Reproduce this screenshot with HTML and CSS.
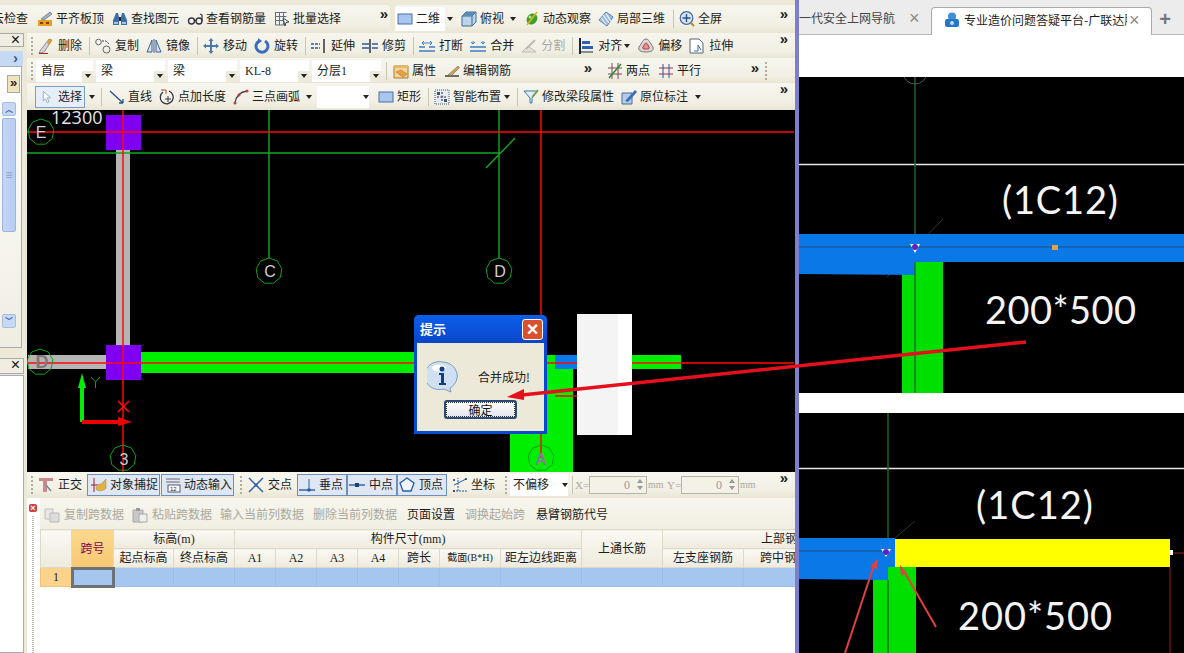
FILE: index.html
```html
<!DOCTYPE html>
<html lang="zh">
<head>
<meta charset="utf-8">
<title>钢筋算量与问题答疑</title>
<link rel="stylesheet" href="styles.css">
</head>
<body>
<svg class="defs" width="0" height="0">
<defs>
<symbol id="i-level" viewBox="0 0 16 16"><path d="M1 9h14v6H1z" fill="#e8a020"/><path d="M3 11h3v2H3zM9 11h3v2H9z" fill="#8a3a10"/><path d="M4 8 13 1l2 2-8 6z" fill="#9fb4c8" stroke="#556" stroke-width=".6"/></symbol>
<symbol id="i-binoc" viewBox="0 0 16 16"><path d="M2 7 4 2h2l1 4v8H1V9zM14 7l-2-5h-2L9 6v8h6V9z" fill="#3a6ea8"/><path d="M7 6h2v4H7z" fill="#223"/><path d="M2 11h4v2H2zM10 11h4v2h-4z" fill="#a8c4e4"/></symbol>
<symbol id="i-glass" viewBox="0 0 16 16"><circle cx="4.500" cy="10" r="3" fill="none" stroke="#334" stroke-width="1.400"/><circle cx="12" cy="10" r="3" fill="none" stroke="#334" stroke-width="1.400"/><path d="M7.500 9.500h1.500M15 10V4l-2-1" fill="none" stroke="#334" stroke-width="1.200"/></symbol>
<symbol id="i-batch" viewBox="0 0 16 16"><path d="M1.500 1.500h11M1.500 5.500h11M1.500 9.500h8M1.500 14h8M1.500 1v13M5.500 1v13M9.500 1v13" stroke="#5c6f90" fill="none"/><path d="M9 7l6 4-3 .5L11 15z" fill="#fff" stroke="#345"/></symbol>
<symbol id="i-rect" viewBox="0 0 16 16"><rect x="1" y="3" width="14" height="10" fill="#a9c6f0" stroke="#4b6fa8"/></symbol>
<symbol id="i-cube" viewBox="0 0 16 16"><path d="M1 5 5 1h10v10l-4 4H1z" fill="#bcd4ea" stroke="#3f6d92"/><path d="M1 5h10v10M11 5l4-4" fill="none" stroke="#3f6d92"/><path d="M1 5 5 1h10l-4 4z" fill="#5b8cb4"/></symbol>
<symbol id="i-orbit" viewBox="0 0 16 16"><ellipse cx="8" cy="8" rx="5" ry="6" transform="rotate(40 8 8)" fill="#3aa030"/><path d="M13 1 3 14" stroke="#e8b020" stroke-width="1.500"/><circle cx="6" cy="6" r="1.500" fill="#b6e890"/></symbol>
<symbol id="i-local" viewBox="0 0 16 16"><path d="M8 1l7 5-6 9-8-6z" fill="#9fc0e6" stroke="#567fae"/><path d="M5 4l6 8M8 2.500l5 8M3 6.500l5 7" stroke="#fff" stroke-width="1"/></symbol>
<symbol id="i-full" viewBox="0 0 16 16"><circle cx="7.500" cy="7" r="6.300" fill="#d4e4f6" stroke="#47689a" stroke-width="1.200"/><path d="M7.500 3v8M3.500 7h8" stroke="#2b5088" stroke-width="1.400"/><path d="m12 12 3 3" stroke="#b88a20" stroke-width="2"/></symbol>
<symbol id="i-del" viewBox="0 0 16 16"><path d="M1 15c4 0 6-1 7-4l6-9-3-1-6 8c-2 2-3 4-4 6z" fill="#d8d4e0" stroke="#555" stroke-width=".6"/><path d="M1 15.500h9" stroke="#b02020"/><path d="m11 1 3 1-3 5-2-2z" fill="#e0a030"/></symbol>
<symbol id="i-copy" viewBox="0 0 16 16"><circle cx="3.500" cy="4" r="2.800" fill="none" stroke="#667"/><circle cx="11.500" cy="11.500" r="3.500" fill="none" stroke="#667"/><path d="M7 3h4l3 3" fill="none" stroke="#345" stroke-dasharray="2 1"/></symbol>
<symbol id="i-mirror" viewBox="0 0 16 16"><path d="M6 2v12H1zM10 2v12h5z" fill="#d6e3f2" stroke="#3d5f8c"/><path d="M8 1v14" stroke="#3d5f8c"/></symbol>
<symbol id="i-move" viewBox="0 0 16 16"><path d="M8 0l2.500 3H9v4h4V5.500L16 8l-3 2.500V9H9v4h1.500L8 16l-2.500-3H7V9H3v1.500L0 8l3-2.500V7h4V3H5.500z" fill="#4d79ad"/></symbol>
<symbol id="i-rot" viewBox="0 0 16 16"><path d="M5 3a6 6 0 1 0 6 0" fill="none" stroke="#3a6cc0" stroke-width="3"/><path d="M4 0v6l4-3z" fill="#3a6cc0"/></symbol>
<symbol id="i-ext" viewBox="0 0 16 16"><path d="M0 6h9M0 10h9" stroke="#3057a0" stroke-dasharray="3 1" stroke-width="1.400"/><path d="M13 1v14" stroke="#333" stroke-width="1.500"/></symbol>
<symbol id="i-trim" viewBox="0 0 16 16"><path d="M0 6h7M0 10h7M10 6h6M10 10h6" stroke="#3057a0" stroke-width="1.400"/><path d="M8 1v14" stroke="#333" stroke-width="1.500"/></symbol>
<symbol id="i-break" viewBox="0 0 16 16"><path d="M0 9h6M10 9h6M0 13h16" stroke="#3d7ec8" stroke-width="1.500"/><path d="M3 5h10M5 3 3 5l2 2M11 3l2 2-2 2" stroke="#3d7ec8" fill="none"/></symbol>
<symbol id="i-merge" viewBox="0 0 16 16"><path d="M0 9h16M0 13h16" stroke="#3d7ec8" stroke-width="1.500"/><path d="M3 6V3M13 6V3M1 4l2 2 2-2M11 4l2 2 2-2" stroke="#3d7ec8" fill="none"/></symbol>
<symbol id="i-split" viewBox="0 0 16 16"><path d="M1 14h14L7 8z" fill="#e6e4da" stroke="#bbb"/><path d="m5 11 9-9" stroke="#bbb" stroke-width="2"/></symbol>
<symbol id="i-align" viewBox="0 0 16 16"><path d="M2 0v16" stroke="#223" stroke-width="2"/><path d="M4 3h8v3H4z" fill="#2b62b8"/><path d="M4 8h11v3H4z" fill="#2b62b8"/><path d="M3 14h12" stroke="#223"/></symbol>
<symbol id="i-offset" viewBox="0 0 16 16"><path d="M8 1c3 0 4 4 7 8 1 3-1 5-7 5s-8-2-7-5c3-4 4-8 7-8z" fill="#d8d8d8" stroke="#777"/><path d="M8 5c1 0 2 2 3 4 1 2-1 2-3 2s-4 0-3-2c1-2 2-4 3-4z" fill="#e89090" stroke="#b03030"/></symbol>
<symbol id="i-stretch" viewBox="0 0 16 16"><path d="M1 1h9l4 4v10H1z" fill="#fff" stroke="#56657a"/><path d="M9 7v6H5M9 7l3 5" stroke="#3a70b0" fill="none"/></symbol>
<symbol id="i-attr" viewBox="0 0 16 16"><path d="M1 3h14v12H1z" fill="#f4d690" stroke="#a87a30"/><path d="M1 3h14v2H1z" fill="#e8b860"/><path d="m3 9 5-2 6 4-4 3z" fill="#e8a040" stroke="#964" stroke-width=".5"/></symbol>
<symbol id="i-edit" viewBox="0 0 16 16"><path d="M1 13h14" stroke="#333" stroke-width="1.400"/><path d="M4 12 14 3l1.500 1.500L7 13z" fill="#cda060" stroke="#654" stroke-width=".5"/></symbol>
<symbol id="i-two" viewBox="0 0 16 16"><path d="M1 5h14M1 11h14M5 0v16M11 0v16" stroke="#7c4a60"/><path d="m2 15 12-14" stroke="#2a8a30" stroke-width="1.500"/></symbol>
<symbol id="i-par" viewBox="0 0 16 16"><path d="M1 5h14M1 11h14" stroke="#a03050"/><path d="M5 1v14M11 1v14" stroke="#3050a0"/></symbol>
<symbol id="i-sel" viewBox="0 0 16 16"><path d="M4 1v12l3-3 2 5 2-1-2-5h4z" fill="#fff" stroke="#8aa0b8"/></symbol>
<symbol id="i-line" viewBox="0 0 16 16"><path d="m1 2 13 12M14 14v-4M14 14h-4" stroke="#24508c" fill="none" stroke-width="1.300"/></symbol>
<symbol id="i-plen" viewBox="0 0 16 16"><path d="M4 3a6.500 6.500 0 1 0 6-.8" fill="none" stroke="#334" stroke-width="1.300"/><path d="M2 1h5v4" fill="none" stroke="#c04030"/><path d="M9 7v6M6 10h6" stroke="#334"/></symbol>
<symbol id="i-arc" viewBox="0 0 16 16"><path d="M2 14C3 7 7 3 14 2" fill="none" stroke="#445" stroke-width="1.300"/><circle cx="2" cy="14" r="1.500" fill="#c04040"/><circle cx="6" cy="6" r="1.500" fill="#c04040"/><circle cx="14" cy="2" r="1.500" fill="#c04040"/></symbol>
<symbol id="i-smart" viewBox="0 0 16 16"><rect x="1" y="1" width="14" height="14" fill="#e6ecf2" stroke="#456" stroke-dasharray="1 1"/><path d="M8 3v10M3 8h10" stroke="#224" stroke-dasharray="2 1.500"/><path d="M3 3h3v3H3zM10 10h3v3h-3z" fill="#456"/></symbol>
<symbol id="i-mod" viewBox="0 0 16 16"><path d="M1 2h14L9 9v5H7V9z" fill="#dff0f8" stroke="#3878a8"/><path d="m9 8 6-7" stroke="#88a030" stroke-width="1.500"/></symbol>
<symbol id="i-mark" viewBox="0 0 16 16"><path d="M1 4h10v11H1z" fill="#b6cce8" stroke="#45689a"/><path d="M4 12 14 1l2 2-9 10z" fill="#3a70b8"/></symbol>
<symbol id="i-ortho" viewBox="0 0 16 16"><path d="M1 1h14v3H9v11H5V4H1z" fill="#c88a8a"/><path d="m8 8 5 6" stroke="#789" stroke-width="1.500"/></symbol>
<symbol id="i-snap" viewBox="0 0 16 16"><path d="M0 8h7M3 1v14" stroke="#a02020"/><path d="M5 12c0-4 3-5 5-5l5-5v9c-1 3-9 4-10 1z" fill="#e0b040" stroke="#986" stroke-width=".5"/></symbol>
<symbol id="i-dyn" viewBox="0 0 16 16"><path d="M1 2h14M1 5h14" stroke="#667"/><rect x="3" y="8" width="12" height="7" fill="#fff" stroke="#556"/><text class="ic-t" x="5" y="14">12</text></symbol>
<symbol id="i-cross" viewBox="0 0 16 16"><path d="m1 1 14 14M15 1 1 15" stroke="#2a5aa8" stroke-width="1.400"/><circle cx="8" cy="8" r="1.500" fill="#2a5aa8"/></symbol>
<symbol id="i-perp" viewBox="0 0 16 16"><path d="M0 13h16" stroke="#2a5aa8" stroke-width="1.400"/><path d="M10 2v11" stroke="#2a5aa8"/><circle cx="10" cy="13" r="1.800" fill="#2a5aa8"/></symbol>
<symbol id="i-mid" viewBox="0 0 16 16"><path d="M0 8h16" stroke="#2a5aa8" stroke-width="1.400"/><rect x="6" y="6" width="4" height="4" fill="#17407c"/></symbol>
<symbol id="i-vert" viewBox="0 0 16 16"><path d="M8 1l7 5-3 8H4L1 6z" fill="#f0f6fc" stroke="#2a5aa8" stroke-width="1.300"/></symbol>
<symbol id="i-coord" viewBox="0 0 16 16"><path d="M1 14h14M6 14V1" stroke="#2a5aa8" stroke-dasharray="2 1"/><path d="m2 8 6-3 6-3" stroke="#2a5aa8"/><circle cx="2" cy="3" r="1" fill="#234"/><circle cx="14" cy="2" r="1" fill="#234"/><circle cx="2" cy="14" r="1" fill="#234"/></symbol>
<symbol id="i-gcopy" viewBox="0 0 16 16"><path d="M1 2h8v10H1z" fill="#e8e8e8" stroke="#c0c0c0"/><path d="M6 6h9v9H6z" fill="#dcdcdc" stroke="#bbb"/></symbol>
<symbol id="i-gpaste" viewBox="0 0 16 16"><path d="M1 3h10v12H1z" fill="#c8c8c8" stroke="#aaa"/><path d="M4 1h4v3H4z" fill="#999"/><path d="M7 7h8v8H7z" fill="#eee" stroke="#aaa"/></symbol>
<g id="ax"><polygon points="0,-13 8.400,-10 12.800,-2.300 11.300,6.500 4.400,12.200 -4.400,12.200 -11.300,6.500 -12.800,-2.300 -8.400,-10" fill="none" stroke="#0fa020"/></g>
</defs>
</svg>

<div class="page">
  <main class="app">
    <div class="top-row">
      <div class="bar bar-a tight">
        <span class="cut">云检查</span>
        <span class="tool"><svg class="ic"><use href="#i-level"/></svg>平齐板顶</span>
        <span class="tool"><svg class="ic"><use href="#i-binoc"/></svg>查找图元</span>
        <span class="tool"><svg class="ic"><use href="#i-glass"/></svg>查看钢筋量</span>
        <span class="tool"><svg class="ic"><use href="#i-batch"/></svg>批量选择</span>
        <span class="more">»</span>
      </div>
      <div class="bar bar-b tight">
        <span class="tool chosen"><svg class="ic"><use href="#i-rect"/></svg>二维</span><i class="dd dd-view"></i>
        <span class="tool"><svg class="ic"><use href="#i-cube"/></svg>俯视</span><i class="dd dd-view"></i>
        <span class="tool t-7"><svg class="ic"><use href="#i-orbit"/></svg>动态观察</span>
        <span class="tool"><svg class="ic"><use href="#i-local"/></svg>局部三维</span>
        <i class="sep"></i>
        <span class="tool"><svg class="ic"><use href="#i-full"/></svg>全屏</span>
        <span class="more">»</span>
      </div>
    </div>

    <div class="work">
      <aside class="side">
        <div class="side-head"><span class="x">×</span></div>
        <div class="side-tab">›</div>
        <div class="side-panel">
          <div class="side-more">»</div>
          <div class="scroll">
            <div class="sb-btn">︿</div>
            <div class="sb-thumb">≡</div>
            <div class="sb-track"></div>
            <div class="sb-btn">﹀</div>
          </div>
        </div>
        <div class="side-head side-head2"><span class="x">×</span></div>
        <div class="side-list"></div>
      </aside>

      <div class="main">
        <div class="row row2">
          <i class="grip"></i>
          <span class="tool"><svg class="ic"><use href="#i-del"/></svg>删除</span><i class="sep"></i>
          <span class="tool"><svg class="ic"><use href="#i-copy"/></svg>复制</span>
          <span class="tool"><svg class="ic"><use href="#i-mirror"/></svg>镜像</span><i class="sep"></i>
          <span class="tool"><svg class="ic"><use href="#i-move"/></svg>移动</span>
          <span class="tool"><svg class="ic"><use href="#i-rot"/></svg>旋转</span><i class="sep"></i>
          <span class="tool"><svg class="ic"><use href="#i-ext"/></svg>延伸</span>
          <span class="tool"><svg class="ic"><use href="#i-trim"/></svg>修剪</span><i class="sep"></i>
          <span class="tool"><svg class="ic"><use href="#i-break"/></svg>打断</span>
          <span class="tool"><svg class="ic"><use href="#i-merge"/></svg>合并</span>
          <span class="tool off"><svg class="ic"><use href="#i-split"/></svg>分割</span><i class="sep"></i>
          <span class="tool t-dd"><svg class="ic"><use href="#i-align"/></svg>对齐</span><i class="dd dd-tight"></i>
          <span class="tool"><svg class="ic"><use href="#i-offset"/></svg>偏移</span>
          <span class="tool"><svg class="ic"><use href="#i-stretch"/></svg>拉伸</span>
          <span class="more">»</span>
        </div>

        <div class="row row3">
          <i class="grip"></i>
          <span class="sel sel-first">首层<i class="sel-btn"></i></span>
          <span class="sel">梁<i class="sel-btn"></i></span>
          <span class="sel">梁<i class="sel-btn"></i></span>
          <span class="sel">KL-8<i class="sel-btn"></i></span>
          <span class="sel">分层1<i class="sel-btn"></i></span>
          <i class="sep sep-sel"></i>
          <span class="tool"><svg class="ic"><use href="#i-attr"/></svg>属性</span>
          <span class="tool"><svg class="ic"><use href="#i-edit"/></svg>编辑钢筋</span>
          <span class="more more-mid">»</span>
          <span class="tool t-two"><svg class="ic"><use href="#i-two"/></svg>两点</span>
          <span class="tool"><svg class="ic"><use href="#i-par"/></svg>平行</span>
          <span class="more more-end">»</span>
          <i class="grip grip-end"></i>
        </div>

        <div class="row row4">
          <span class="tool chosen-btn"><svg class="ic ic-sel"><use href="#i-sel"/></svg>选择</span><i class="dd dd-sel"></i><i class="sep"></i>
          <span class="tool t-line"><svg class="ic"><use href="#i-line"/></svg>直线</span>
          <span class="tool"><svg class="ic"><use href="#i-plen"/></svg>点加长度</span>
          <span class="tool"><svg class="ic"><use href="#i-arc"/></svg>三点画弧</span><i class="dd dd-arc"></i>
          <span class="sel sel-blank"><i class="dd dd-in"></i></span>
          <span class="tool"><svg class="ic"><use href="#i-rect"/></svg>矩形</span><i class="sep"></i>
          <span class="tool"><svg class="ic"><use href="#i-smart"/></svg>智能布置</span><i class="dd dd-smart"></i><i class="sep"></i>
          <span class="tool"><svg class="ic"><use href="#i-mod"/></svg>修改梁段属性</span>
          <span class="tool"><svg class="ic"><use href="#i-mark"/></svg>原位标注</span><i class="dd dd-mark"></i>
          <span class="more">»</span>
        </div>

        <div class="canvas">
          <svg class="draw" viewBox="27 110 767 362" width="767" height="362">
            <rect x="27" y="110" width="767" height="362" fill="#000"/>
            <rect x="510" y="355" width="63" height="117" fill="#00ee00"/>
            <rect x="141" y="352" width="274" height="21" fill="#00ee00"/>
            <rect x="632" y="355" width="49" height="14" fill="#00ee00"/>
            <rect x="116" y="150" width="14" height="195" fill="#b5b5b5"/>
            <rect x="28" y="355" width="78" height="14" fill="#b5b5b5"/>
            <rect x="555" y="355" width="22" height="14" fill="#0a7ae8"/>
            <rect x="106" y="115" width="35" height="35" fill="#7f00f0"/>
            <rect x="106" y="345" width="35" height="35" fill="#7f00f0"/>
            <g stroke="#10a822" fill="none" stroke-width="1.400">
              <path d="M27 153h473M269 110v148M499 110v148M486 168l29-30"/>
            </g>
            <g stroke="#ff0808" fill="none" stroke-width="1.500">
              <path d="M27 132h767M27 363h767M123 110v362M541 110v348M555 396h22"/>
              <path d="m118 401 11 11m0-11-11 11"/>
            </g>
            <rect x="577" y="314" width="55" height="121" fill="#fff"/>
            <rect x="577" y="314" width="41" height="121" fill="#f4f4f4"/>
            <use href="#ax" x="41" y="132"/><use href="#ax" x="40" y="362"/><use href="#ax" x="123" y="458"/>
            <use href="#ax" x="269" y="271"/><use href="#ax" x="499" y="271"/><use href="#ax" x="541" y="458"/>
            <text class="cad cad-num" x="51" y="124">12300</text>
            <text class="cad" x="41" y="138">E</text>
            <text class="cad cad-dim" x="42" y="368">D</text>
            <text class="cad" x="124" y="465">3</text>
            <text class="cad" x="270" y="277">C</text>
            <text class="cad" x="500" y="277">D</text>
            <text class="cad cad-a" x="541" y="465">A</text>
            <path d="M80 422v-34h-2l4-15 4 15h-2v34z" fill="#00ee00"/>
            <path d="M82 420h36v-3l14 5-14 4v-2H82z" fill="#ee0000"/>
            <path d="m91 377 4.500 5 4.500-5M95.500 382v6" stroke="#0fa020" fill="none"/>
          </svg>
          <div class="dialog" role="dialog">
            <div class="dlg-title"><span>提示</span><b class="dlg-close">×</b></div>
            <div class="dlg-body">
              <div class="dlg-msg">
                <svg class="dlg-ic" viewBox="0 0 32 32"><path d="M16 1a15 14 0 0 1 7 26l1 4-7-3A15 14 0 1 1 16 1z" fill="#cfe0f2" stroke="#7c9cc4"/><ellipse cx="12" cy="7" rx="7" ry="3.500" fill="#fff"/><circle cx="15" cy="8" r="2.500" fill="#123c86"/><path d="M12 12h5v10h2v2h-7v-2h2v-8h-2z" fill="#123c86"/></svg>
                <span>合并成功!</span>
              </div>
              <button class="dlg-btn" type="button">确定</button>
            </div>
          </div>
        </div>

        <div class="row status">
          <i class="grip"></i>
          <span class="tool"><svg class="ic"><use href="#i-ortho"/></svg>正交</span>
          <span class="tool toggle t-wide"><svg class="ic"><use href="#i-snap"/></svg>对象捕捉</span>
          <span class="tool toggle t-wide"><svg class="ic"><use href="#i-dyn"/></svg>动态输入</span>
          <i class="grip grip-st"></i>
          <span class="tool"><svg class="ic"><use href="#i-cross"/></svg>交点</span>
          <span class="tool toggle"><svg class="ic"><use href="#i-perp"/></svg>垂点</span>
          <span class="tool toggle"><svg class="ic"><use href="#i-mid"/></svg>中点</span>
          <span class="tool toggle"><svg class="ic"><use href="#i-vert"/></svg>顶点</span>
          <span class="tool t-coord"><svg class="ic"><use href="#i-coord"/></svg>坐标</span>
          <i class="grip grip-sel"></i>
          <span class="sel sel-off">不偏移<i class="dd dd-in"></i></span>
          <i class="sep sep-st"></i>
          <span class="lbl">X=</span><span class="spin">0<i class="spin-btn"></i></span><span class="lbl lbl-mm">mm</span>
          <span class="lbl lbl-y">Y=</span><span class="spin">0<i class="spin-btn"></i></span><span class="lbl lbl-mm">mm</span>
          <span class="more">»</span>
        </div>

        <section class="panel">
          <div class="panel-gutter"><i class="panel-close">×</i><i class="dots"></i></div>
          <div class="panel-body">
            <div class="panel-tools">
              <span class="tool off"><svg class="ic"><use href="#i-gcopy"/></svg>复制跨数据</span>
              <span class="tool off"><svg class="ic"><use href="#i-gpaste"/></svg>粘贴跨数据</span>
              <span class="tool off">输入当前列数据</span>
              <span class="tool off">删除当前列数据</span>
              <span class="tool">页面设置</span>
              <span class="tool off">调换起始跨</span>
              <span class="tool">悬臂钢筋代号</span>
            </div>
            <table class="grid">
              <colgroup>
                <col class="c-n"><col class="c-s"><col class="c-w1"><col class="c-w"><col class="c-a"><col class="c-a"><col class="c-a"><col class="c-a"><col class="c-a"><col class="c-w"><col class="c-l"><col class="c-l"><col class="c-l"><col class="c-l">
              </colgroup>
              <thead>
                <tr>
                  <th rowspan="2"></th><th rowspan="2" class="key">跨号</th>
                  <th colspan="2">标高(m)</th><th colspan="7">构件尺寸(mm)</th>
                  <th rowspan="2">上通长筋</th><th colspan="2" class="right-clip">上部钢筋</th>
                </tr>
                <tr>
                  <th>起点标高</th><th>终点标高</th><th>A1</th><th>A2</th><th>A3</th><th>A4</th><th>跨长</th><th class="small">截面(B*H)</th><th>距左边线距离</th><th>左支座钢筋</th><th>跨中钢筋</th>
                </tr>
              </thead>
              <tbody>
                <tr>
                  <td class="num">1</td><td class="cur"></td><td></td><td></td><td></td><td></td><td></td><td></td><td></td><td></td><td></td><td></td><td></td><td></td>
                </tr>
              </tbody>
            </table>
          </div>
        </section>
      </div>
    </div>
  </main>

  <div class="divider"></div>

  <section class="browser">
    <nav class="tabs">
      <div class="tab tab-off"><span class="tab-text">一代安全上网导航</span><span class="tab-x">×</span></div>
      <div class="tab tab-on">
        <svg class="tab-ic" viewBox="0 0 16 16"><circle cx="8" cy="4.500" r="4" fill="#3f8fd8"/><rect x="1" y="7" width="14" height="8" rx="2" fill="#2477c8"/><circle cx="8" cy="11" r="2" fill="#bfe0fa"/></svg>
        <span class="tab-text">专业造价问题答疑平台-广联达服务新干线</span><span class="tab-x">×</span>
      </div>
      <span class="tab-add">+</span>
    </nav>
    <div class="white-a"></div>
    <svg class="shot shot-a" viewBox="799 77 385 316" width="385" height="316">
      <rect x="799" y="77" width="385" height="316" fill="#000"/>
      <path d="M799 164.500h385" stroke="#e8e8e8" stroke-width="1.500"/>
      <path d="m887 277 56-58" stroke="#2a3a28"/>
      <rect x="902" y="262" width="41" height="131" fill="#00e000"/>
      <path d="M799 234h385v28H915v13l-116-1z" fill="#0a78e6"/>
      <path d="M799 247h385" stroke="#1a5aa0" stroke-width="1.400"/>
      <path d="M915 77v157M915 262v131" stroke="#1f6a28" stroke-width="1.400"/>
      <circle cx="915" cy="72" r="12" fill="none" stroke="#555"/>
      <path d="m910 244 10 0-5 9z" fill="#fff"/><circle cx="915" cy="247" r="3" fill="#6020c0"/>
      <rect x="1052" y="245" width="6" height="5" fill="#e8a040"/>
      <text class="anno" x="1002" y="214" textLength="116">(1C12)</text>
      <text class="anno" x="985" y="324" textLength="151">200*500</text>
    </svg>
    <div class="white-b"></div>
    <svg class="shot shot-b" viewBox="799 413 385 240" width="385" height="240">
      <rect x="799" y="413" width="385" height="240" fill="#000"/>
      <path d="M799 468.500h385" stroke="#e8e8e8" stroke-width="1.500"/>
      <path d="m895 538 20-17" stroke="#2a3a28"/>
      <rect x="873" y="567" width="43" height="86" fill="#00e000"/>
      <path d="M799 538h96v29h-7v13l-89-1z" fill="#0a78e6"/>
      <path d="M799 551h85" stroke="#1a5aa0" stroke-width="1.400"/>
      <rect x="895" y="539" width="275" height="28" fill="#ffff00"/>
      <path d="M888 413v125M888 580v73" stroke="#1f6a28" stroke-width="1.400"/>
      <path d="M1170 567v86M1172 553h12" stroke="#6a1414" stroke-width="1.400"/>
      <rect x="1169" y="550" width="4" height="5" fill="#fff"/>
      <path d="m881 549 10 0-5 8z" fill="#fff"/><circle cx="886" cy="552" r="3" fill="#6020c0"/>
      <path d="m845 653 29-88" stroke="#e04040" stroke-width="2"/><path d="m878 558-8 9 7 2z" fill="#e04040"/>
      <path d="m936 627-31-54" stroke="#e04040" stroke-width="2"/><path d="m900 565 1 11 6-3z" fill="#e04040"/>
      <text class="anno" x="976" y="519" textLength="117">(1C12)</text>
      <text class="anno" x="958" y="630" textLength="154">200*500</text>
    </svg>
  </section>

  <svg class="big-arrow" viewBox="0 0 1184 653" width="1184" height="653">
    <path d="M1026 342 522 395" stroke="#e4101c" stroke-width="3.500"/>
    <path d="m507 397 17-8 0 11z" fill="#e4101c"/>
  </svg>
</div>
</body>
</html>
```
FILE: styles.css
```css
* { box-sizing: border-box; }
html, body { margin: 0; padding: 0; }
body {
  width: 1184px;
  height: 653px;
  overflow: hidden;
  font: 12px/16px "Liberation Serif", "Noto Sans CJK SC", serif;
  color: #1c1c1c;
  background: #fff;
}
.defs { position: absolute; }
i { font-style: normal; }

.page { position: relative; display: flex; width: 1184px; height: 653px; }
.app { width: 795px; height: 653px; display: flex; flex-direction: column; background: #ece9d8; overflow: hidden; flex: none; }
.divider { width: 4px; flex: none; background: #7c80cc; }

/* toolbars */
.top-row { height: 33px; padding-top: 5px; display: flex; flex: none; }
.bar, .row {
  display: flex;
  align-items: center;
  white-space: nowrap;
  background: linear-gradient(#f7f6ee, #f2f0e4 70%, #e8e5d4);
}
.bar { height: 28px; }
.bar-a { width: 390px; border-radius: 0 4px 4px 0; position: relative; }
.bar-b { flex: 1; margin-left: 5px; border-radius: 4px 0 0 4px; position: relative; }
.cut { margin-left: -8px; margin-right: 9px; }
.tool { display: inline-flex; align-items: center; gap: 4px; margin-right: 8px; flex: none; }
.tight .tool, .row3 .tool, .row4 .tool { gap: 3px; }
.t-7 { margin-right: 7px; }
.ic { width: 16px; height: 16px; flex: none; overflow: visible; }
.ic-t { font: 6px "Liberation Sans", sans-serif; fill: #222; }
.off { color: #a9a9a0; }
.sep { width: 1px; height: 18px; margin: 0 5px 0 0; background: #c8c5b4; flex: none; }
.more {
  position: absolute;
  right: 7px;
  top: -2px;
  font: bold 15px/16px "Liberation Sans", sans-serif;
  color: #222;
}
.bar-a .more { top: 1px; right: 2px; }
.bar-b .more { top: 1px; }
.grip {
  width: 2px;
  height: 18px;
  margin: 0 5px 0 0;
  flex: none;
  background: repeating-linear-gradient(#b0ad9c 0 2px, transparent 2px 4px);
}
.dd { width: 0; height: 0; border: 3px solid transparent; border-top: 4px solid #222; border-bottom: 0; flex: none; }
.dd-view { margin: 0 8px 0 -2px; }
.bar-b .chosen + .dd { margin-left: 0; }
.dd-tight { margin: 0 8px 0 -5px; }
.bar-b .chosen { background: #fff; margin-right: 2px; padding: 0 5px 0 2px; height: 24px; gap: 3px; }

.work { flex: 1; display: flex; min-height: 0; }
.side { width: 27px; flex: none; display: flex; flex-direction: column; font-family: "Liberation Sans", sans-serif; }
.side-head { height: 14px; width: 24px; border: 1px solid #aaa; border-left: 0; background: #f0eee2; position: relative; flex: none; }
.x { position: absolute; right: 3px; top: -2px; font: 16px/16px "Liberation Sans", sans-serif; color: #111; }
.side-tab { margin-top: 4px; height: 15px; width: 23px; background: #c6d9f2; text-align: right; padding-right: 5px; font: bold 15px/13px "Liberation Sans", sans-serif; color: #3b5c90; flex: none; }
.side-panel { height: 282px; width: 22px; border: 1px solid #aab; border-left: 0; flex: none; position: relative; background: linear-gradient(#fff, #f0eee2); }
.side-more { position: absolute; left: 7px; top: 8px; width: 13px; height: 18px; background: #efe4bc; border: 1px solid #a8a8a0; font: bold 13px/14px "Liberation Sans", sans-serif; color: #222; text-align: center; }
.scroll { position: absolute; left: 2px; top: 35px; width: 14px; height: 226px; display: flex; flex-direction: column; gap: 2px; }
.sb-btn { height: 14px; background: #c6d9f4; border: 1px solid #a8bcdc; border-radius: 2px; font: bold 8px/11px "Noto Sans CJK SC", sans-serif; color: #34569a; text-align: center; overflow: hidden; }
.sb-thumb { height: 114px; background: linear-gradient(90deg, #c4d6f6, #b6ccf2); border: 1px solid #9db4dc; border-radius: 2px; text-align: center; line-height: 112px; color: #8ba4d0; }
.sb-track { flex: 1; }
.side-head2 { margin-top: 10px; height: 16px; }
.side-list { flex: 1; width: 24px; margin-top: 1px; background: #fff; border: 1px solid #aab; border-left: 0; }

.main { flex: 1; min-width: 0; display: flex; flex-direction: column; position: relative; }
.row { flex: none; position: relative; padding-left: 4px; }
.row2 { height: 25px; }
.row2 .tool { margin-right: 7px; }
.row3 { height: 25px; }
.row4 { height: 27px; padding-left: 8px; }
.row4 .tool { margin-right: 7px; }
.sel {
  width: 69px;
  height: 22px;
  margin-right: 3px;
  padding: 3px 0 0 5px;
  background: #fff;
  position: relative;
  flex: none;
}
.sel-first { width: 57px; }
.row3 > .grip:first-child { margin-right: 3px; }
.sel-btn { position: absolute; right: 0; bottom: 0; width: 11px; height: 11px; background: #eeeadb; }
.sel-btn::after { content: ""; position: absolute; left: 3px; top: 3px; border: 3px solid transparent; border-top: 4px solid #222; border-bottom: 0; }
.sep-sel { margin-left: 2px; margin-right: 6px; }
.row3 > .more { top: 2px; }
.row3 > .more-mid { right: 203px; }
.row3 > .more-end { right: 36px; }
.t-two { margin-left: 88px; }
.grip-end { margin-left: 56px; }
.row4 > .chosen-btn { width: 50px; height: 22px; margin-right: 4px; padding-left: 4px; gap: 5px; background: #e6eefa; border: 1px solid #7a9cc8; }
.ic-sel { width: 13px; height: 16px; }
.dd-sel { margin-right: 6px; }
.t-line { margin-left: 2px; }
.dd-arc { margin: 0 5px 0 -1px; }
.dd-smart { margin: 0 7px 0 -4px; }
.sel-blank { width: 52px; margin: 0 9px 0 0; }
.dd-in { position: absolute; right: 0; top: 9px; }

.canvas { height: 362px; flex: none; position: relative; background: #000; }
.draw { display: block; }
.cad { font: 16px "Liberation Sans", sans-serif; fill: #cfcfcf; text-anchor: middle; }
.cad-num { font-size: 18px; text-anchor: start; fill: #e4e4e4; font-family: "Open Sans", sans-serif; }
.cad-dim { fill: #7a7a7a; font-size: 18px; font-weight: bold; }
.cad-a { fill: #8a7a9a; font-weight: bold; }

.dialog {
  position: absolute;
  left: 387px;
  top: 205px;
  width: 133px;
  height: 119px;
  display: flex;
  flex-direction: column;
  border: 3px solid #0a4ad0;
  border-top: 0;
  border-radius: 5px 5px 0 0;
  background: #ece9d8;
  font-family: "Noto Sans CJK SC", sans-serif;
}
.dlg-title {
  height: 28px;
  margin: 0 -3px;
  padding: 0 4px 0 6px;
  display: flex;
  align-items: center;
  justify-content: space-between;
  border-radius: 5px 5px 0 0;
  background: linear-gradient(#0a5fe8, #0a52dc 50%, #0a46c8);
  color: #fff;
  font-weight: bold;
  font-size: 13px;
}
.dlg-close {
  width: 21px;
  height: 21px;
  border: 1px solid #fff;
  border-radius: 3px;
  background: #d8502c;
  color: #fff;
  font: bold 20px/18px "Liberation Sans", sans-serif;
  text-align: center;
}
.dlg-body { flex: 1; display: flex; flex-direction: column; align-items: center; }
.dlg-msg { display: flex; align-items: center; width: 100%; padding: 10px 0 0 10px; height: 58px; }
.dlg-ic { width: 32px; height: 32px; flex: none; margin-right: 19px; }
.dlg-msg span { white-space: nowrap; }
.dlg-btn {
  width: 73px;
  height: 19px;
  margin-top: -1px;
  padding: 0;
  font: 12px/15px "Noto Sans CJK SC", sans-serif;
  color: #111;
  background: linear-gradient(#fff, #e4e6ee);
  border: 2px solid #2a4a78;
  border-radius: 3px;
  outline: 1px dotted #333;
  outline-offset: -3px;
}

.status { height: 26px; }
.status .tool { margin-right: 5px; }
.status .toggle { height: 22px; padding: 0 1px; gap: 4px; background: #dfe7f2; border: 1px solid #6e8fbc; margin-right: 0; width: 50px; }
.status .t-wide { width: 73px; padding-left: 3px; gap: 3px; margin-right: 1px; }
.grip-st { margin: 0 6px 0 5px; }
.status .t-coord { margin-left: 5px; gap: 3px; }
.grip-sel { margin: 0 3px 0 5px; }
.sel-off { width: 58px; padding-left: 3px; margin-right: 3px; }
.sep-st { margin: 0 2px 0 1px; }
.lbl { color: #aaa89a; font-size: 11px; width: 14px; flex: none; }
.lbl-mm { width: 18px; font-size: 10px; margin-left: 1px; }
.lbl-y { margin-left: 1px; }
.spin { width: 58px; height: 18px; border: 1px solid #b4b4a8; text-align: right; padding-right: 16px; color: #999; background: #f4f2e6; position: relative; flex: none; }
.spin-btn { position: absolute; right: 3px; top: 2px; width: 0; height: 0; border: 3px solid transparent; border-bottom: 4px solid #999; border-top: 0; }
.spin-btn::after { content: ""; position: absolute; left: -3px; top: 7px; border: 3px solid transparent; border-top: 4px solid #999; border-bottom: 0; }

.panel { flex: 1; min-height: 0; display: flex; background: #fff; overflow: hidden; }
.panel-gutter { width: 13px; flex: none; position: relative; }
.panel-close { position: absolute; left: 2px; top: 6px; width: 8px; height: 8px; border-radius: 2px; background: #d04040; color: #fff; font: bold 9px/8px "Liberation Sans", sans-serif; text-align: center; }
.dots { position: absolute; left: 5px; top: 18px; bottom: 0; width: 2px; background: repeating-linear-gradient(#b8b8a8 0 1px, transparent 1px 2px); }
.panel-body { flex: 1; min-width: 0; overflow: hidden; }
.panel-tools { height: 31px; padding: 2px 0 0 4px; display: flex; align-items: center; background: linear-gradient(#f7f6ee, #f1efe2); white-space: nowrap; }
.panel-tools .tool { margin-right: 9px; }
.panel-tools .tool:nth-child(-n+2) { margin-right: 8px; }
.panel-tools .tool:nth-child(4), .panel-tools .tool:nth-child(5) { margin-right: 10px; }
.panel-tools .tool:nth-child(6) { margin-right: 11px; }
.grid { border-collapse: collapse; table-layout: fixed; width: 784px; border-top: 1px solid #8a9cb4; border-left: 1px solid #8a9cb4; }
.c-n { width: 31px; }
.c-s { width: 42px; }
.c-w1 { width: 60px; }
.c-w { width: 61px; }
.c-a { width: 41px; }
.c-l { width: 81px; }
.grid th, .grid td { height: 19px; padding: 0; border: 1px solid #dcdacb; overflow: hidden; white-space: nowrap; }
.grid th { font-weight: normal; background: linear-gradient(#faf9f3, #eeeadc); }
.grid th.key { background: linear-gradient(#fbd98e, #f7c872); color: #8a0050; }
.grid th.small { font-size: 10px; }
.grid th.right-clip { text-align: left; padding-left: 98px; }
.grid td { background: #a5c7ef; border-color: #9dbfe6; }
.grid td.num { background: #fbd38a; text-align: center; border-color: #f0c478; }
.grid td.cur { outline: 3px solid #6c7278; outline-offset: -2px; position: relative; }

/* browser */
.browser { flex: 1; min-width: 0; display: flex; flex-direction: column; background: #fff; }
.tabs { height: 35px; flex: none; display: flex; align-items: flex-end; background: #ececec; border-bottom: 1px solid #b8b8b8; font-family: "Noto Sans CJK SC", sans-serif; }
.tab { height: 28px; display: flex; align-items: center; white-space: nowrap; overflow: hidden; flex: none; }
.tab-off { width: 132px; padding-bottom: 4px; color: #444; }
.tab-off .tab-text { width: 108px; }
.tab-on { width: 221px; height: 28px; margin-bottom: -1px; padding: 0 8px 3px 12px; background: #fff; border: 1px solid #aaa; border-bottom: 0; border-radius: 4px 4px 0 0; }
.tab-ic { width: 16px; height: 16px; flex: none; margin-right: 4px; }
.tab-on .tab-text { width: 163px; overflow: hidden; }
.tab-x { font: 18px/18px "Liberation Sans", sans-serif; color: #888; margin-left: 2px; }
.tab-add { width: 26px; height: 26px; text-align: center; font: bold 20px/22px "Liberation Sans", sans-serif; color: #777; }
.white-a { height: 42px; flex: none; }
.white-b { height: 20px; flex: none; }
.shot { display: block; flex: none; }
.anno { font: 38px "Lato", sans-serif; fill: #f4f4f4; }
.big-arrow { position: absolute; left: 0; top: 0; pointer-events: none; }
```
